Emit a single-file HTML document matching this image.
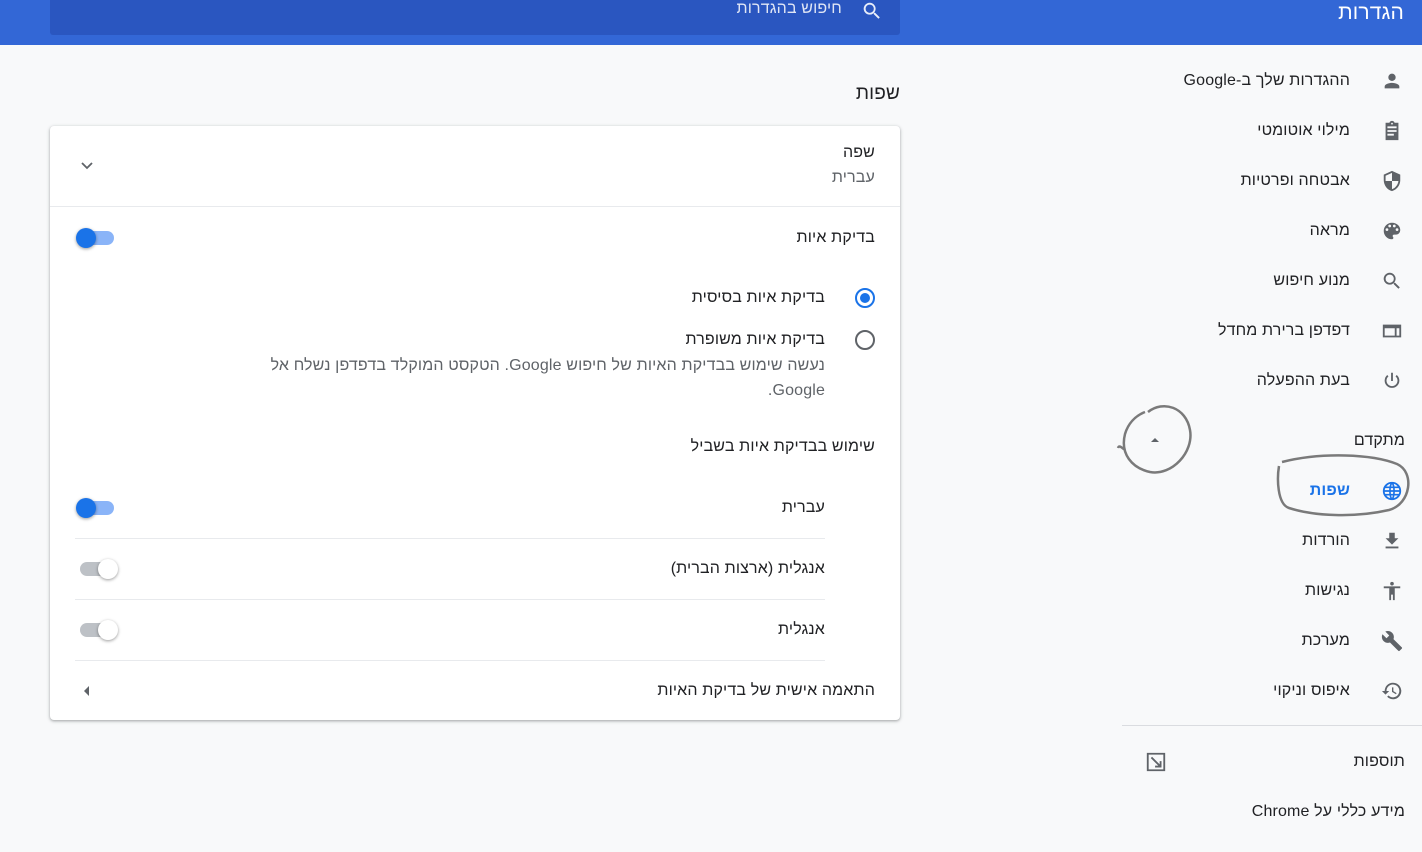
<!DOCTYPE html>
<html dir="rtl"><head><meta charset="utf-8"><style>
*{margin:0;padding:0;box-sizing:border-box}
body{width:1422px;height:852px;background:#f8f9fa;font-family:"Liberation Sans","Noto Sans CJK SC",sans-serif;color:#202124;position:relative;overflow:hidden;font-size:16px;letter-spacing:0.15px}
.a{position:absolute;white-space:nowrap}
.hdr{position:absolute;left:0;top:0;width:1422px;height:45px;background:#3367d6}
.srch{position:absolute;left:50px;top:0;width:850px;height:35px;background:#2a56c0;border-radius:0 0 3px 3px}
.nav{position:absolute;right:72px;font-size:16px;color:#202124;transform:translateY(-50%);white-space:nowrap}
.ic{position:absolute;left:1381px;width:22px;height:22px;transform:translateY(-50%)}
.card{position:absolute;left:50px;top:126px;width:850px;height:594px;background:#fff;border-radius:4px;box-shadow:0 1px 2px rgba(60,64,67,.3),0 1px 3px 1px rgba(60,64,67,.15)}
.t{position:absolute;transform:translateY(-50%);white-space:nowrap}
.sep{position:absolute;height:1px;background:#e8eaed}
.tg{position:absolute;width:36px;height:14px;border-radius:7px}
.tg i{position:absolute;top:-3px;width:20px;height:20px;border-radius:50%;box-shadow:0 1px 3px rgba(0,0,0,.4)}
.on{background:#8ab4f8}.on i{left:-2px;background:#1a73e8}
.off{background:#bdc1c6}.off i{right:-2px;background:#fff}
</style></head><body>
<div class="hdr"></div>
<div class="srch"></div>
<div class="a" style="right:18px;top:1px;color:#fff;font-size:21px">הגדרות</div>
<div class="a" style="right:580px;top:0px;color:#e0e6f5;font-size:16px">חיפוש בהגדרות</div>
<svg class="a" style="left:861px;top:0" width="22" height="22" viewBox="0 0 24 24"><path fill="#e8eefa" d="M15.5 14h-.8l-.3-.3A6.5 6.5 0 1 0 9.5 16a6.5 6.5 0 0 0 4.2-1.6l.3.3v.8l5 5 1.5-1.5-5-5zm-6 0a4.5 4.5 0 1 1 0-9 4.5 4.5 0 0 1 0 9z"/></svg>

<div class="nav" style="top:81px">ההגדרות שלך ב-Google</div>
<div class="nav" style="top:131px">מילוי אוטומטי</div>
<div class="nav" style="top:181px">אבטחה ופרטיות</div>
<div class="nav" style="top:231px">מראה</div>
<div class="nav" style="top:281px">מנוע חיפוש</div>
<div class="nav" style="top:331px">דפדפן ברירת מחדל</div>
<div class="nav" style="top:381px">בעת ההפעלה</div>
<div class="nav" style="top:441px;right:17px">מתקדם</div>
<div class="nav" style="top:491px;color:#1a73e8;font-weight:bold">שפות</div>
<div class="nav" style="top:541px">הורדות</div>
<div class="nav" style="top:591px">נגישות</div>
<div class="nav" style="top:641px">מערכת</div>
<div class="nav" style="top:691px">איפוס וניקוי</div>
<div class="a" style="left:1122px;top:725px;width:300px;height:1px;background:#dadce0"></div>
<div class="nav" style="top:762px;right:17px">תוספות</div>
<div class="nav" style="top:812px;right:17px">מידע כללי על Chrome</div>

<svg class="ic" style="top:81px" viewBox="0 0 24 24"><path fill="#5f6368" d="M12 12a4 4 0 1 0 0-8 4 4 0 0 0 0 8zm0 2c-2.7 0-8 1.3-8 4v2h16v-2c0-2.7-5.3-4-8-4z"/></svg>
<svg class="ic" style="top:131px" viewBox="0 0 24 24"><path fill="#5f6368" d="M19 3h-4.2A3 3 0 0 0 12 1a3 3 0 0 0-2.8 2H5v19h14V3zm-7 0a1 1 0 1 1 0 2 1 1 0 0 1 0-2zm2 14H7v-2h7v2zm3-4H7v-2h10v2zm0-4H7V7h10v2z"/></svg>
<svg class="ic" style="top:181px" viewBox="0 0 24 24"><path fill="#5f6368" d="M12 1 3 5v6c0 5.5 3.8 10.7 9 12 5.2-1.3 9-6.5 9-12V5l-9-4zm0 11h7c-.5 4.1-3.3 7.8-7 8.9V12H5V6.3l7-3.1V12z"/></svg>
<svg class="ic" style="top:231px" viewBox="0 0 24 24"><path fill="#5f6368" d="M12 3a9 9 0 0 0 0 18c.8 0 1.5-.7 1.5-1.5 0-.4-.1-.7-.4-1-.2-.3-.4-.6-.4-1 0-.8.7-1.5 1.5-1.5H16a5 5 0 0 0 5-5c0-4.4-4-8-9-8zm-5.5 9a1.5 1.5 0 1 1 0-3 1.5 1.5 0 0 1 0 3zm3-4a1.5 1.5 0 1 1 0-3 1.5 1.5 0 0 1 0 3zm5 0a1.5 1.5 0 1 1 0-3 1.5 1.5 0 0 1 0 3zm3 4a1.5 1.5 0 1 1 0-3 1.5 1.5 0 0 1 0 3z"/></svg>
<svg class="ic" style="top:281px" viewBox="0 0 24 24"><path fill="#5f6368" d="M15.5 14h-.8l-.3-.3A6.5 6.5 0 1 0 9.5 16a6.5 6.5 0 0 0 4.2-1.6l.3.3v.8l5 5 1.5-1.5-5-5zm-6 0a4.5 4.5 0 1 1 0-9 4.5 4.5 0 0 1 0 9z"/></svg>
<svg class="ic" style="top:331px" viewBox="0 0 24 24"><path fill="#5f6368" d="M2 5v14h20V5H2zm2 4h11v8H4V9zm13 0h3v8h-3V9z"/></svg>
<svg class="ic" style="top:381px" viewBox="0 0 24 24"><path fill="none" stroke="#5f6368" stroke-width="2" d="M12 3v9M7.5 6.2a7 7 0 1 0 9 0"/></svg>
<svg class="ic" style="top:491px" viewBox="0 0 24 24"><circle cx="12" cy="12" r="9" fill="none" stroke="#1a73e8" stroke-width="2"/><path fill="none" stroke="#1a73e8" stroke-width="1.8" d="M3 12h18M12 3c-3 3-3 15 0 18M12 3c3 3 3 15 0 18M4.5 8h15M4.5 16h15"/></svg>
<svg class="ic" style="top:541px" viewBox="0 0 24 24"><path fill="#5f6368" d="M19 9h-4V3H9v6H5l7 7 7-7zM5 18v2h14v-2H5z"/></svg>
<svg class="ic" style="top:591px" viewBox="0 0 24 24"><path fill="#5f6368" d="M12 2a2 2 0 1 1 0 4 2 2 0 0 1 0-4zm9 7h-6v13h-2v-6h-2v6H9V9H3V7h18v2z"/></svg>
<svg class="ic" style="top:641px" viewBox="0 0 24 24"><path fill="#5f6368" d="m22.7 19-9.1-9.1c.9-2.3.4-5-1.5-6.9-2-2-5-2.4-7.4-1.3L9 6 6 9 1.6 4.7C.4 7.1.9 10.1 2.9 12.1c1.9 1.9 4.6 2.4 6.9 1.5l9.1 9.1c.4.4 1 .4 1.4 0l2.300-2.3c.5-.4.5-1.100.1-1.4z"/></svg>
<svg class="ic" style="top:691px" viewBox="0 0 24 24"><path fill="#5f6368" d="M13 3a9 9 0 0 0-9 9H1l3.9 3.9L9 12H6a7 7 0 1 1 2.1 4.9l-1.4 1.4A9 9 0 1 0 13 3zm-1 5v5l4.3 2.5.7-1.2-3.5-2.1V8H12z"/></svg>
<svg class="a" style="left:1145px;top:751px" width="22" height="22" viewBox="0 0 24 24"><path fill="none" stroke="#5f6368" stroke-width="2" d="M3 3h18v18H3zM7 7l10 10M17 11v6h-6"/></svg>
<svg class="a" style="left:1148px;top:435px" width="14" height="10"><path d="M3 7l4-4 4 4z" fill="#5f6368"/></svg>

<svg class="a" style="left:1110px;top:395px" width="310" height="130" viewBox="1110 395 310 130" fill="none" stroke="#7a7a7a" stroke-width="2.5">
<path d="M1148 412c15-12 38-5 42 18 4 22-18 46-40 42-18-4-30-18-25-38 3-10 10-18 20-22M1125 450c-4-3-6-5-7-2"/>
<path d="M1282 462c40-10 90-8 115 2 18 8 14 40-8 46-35 8-75 6-100-2-12-4-12-30-10-42"/>
</svg>

<div class="a" style="right:522px;top:83px;font-size:19px">שפות</div>
<div class="card">
<div class="t" style="right:25px;top:27px">שפה</div>
<div class="t" style="right:25px;top:52px;color:#5f6368">עברית</div>
<svg class="a" style="left:30px;top:35px" width="14" height="10"><path d="M2 2l5 5 5-5" fill="none" stroke="#5f6368" stroke-width="1.8"/></svg>
<div class="sep" style="left:0;right:0;top:80px"></div>
<div class="t" style="right:25px;top:112px">בדיקת איות</div>
<div class="tg on" style="left:28px;top:105px"><i></i></div>
<div class="t" style="right:75px;top:172px">בדיקת איות בסיסית</div>
<div class="a" style="left:805px;top:162px;width:20px;height:20px;border:2px solid #1a73e8;border-radius:50%"><div style="position:absolute;left:3px;top:3px;width:10px;height:10px;border-radius:50%;background:#1a73e8"></div></div>
<div class="t" style="right:75px;top:214px">בדיקת איות משופרת</div>
<div class="a" style="left:805px;top:204px;width:20px;height:20px;border:2px solid #5f6368;border-radius:50%"></div>
<div class="t" style="right:75px;top:240px;color:#5f6368">נעשה שימוש בבדיקת האיות של חיפוש Google. הטקסט המוקלד בדפדפן נשלח אל</div>
<div class="t" style="right:75px;top:265px;color:#5f6368">Google.</div>
<div class="t" style="right:25px;top:321px">שימוש בבדיקת איות בשביל</div>
<div class="t" style="right:75px;top:382px">עברית</div>
<div class="tg on" style="left:28px;top:375px"><i></i></div>
<div class="sep" style="left:25px;right:75px;top:412px"></div>
<div class="t" style="right:75px;top:443px">אנגלית (ארצות הברית)</div>
<div class="tg off" style="left:30px;top:436px"><i></i></div>
<div class="sep" style="left:25px;right:75px;top:473px"></div>
<div class="t" style="right:75px;top:504px">אנגלית</div>
<div class="tg off" style="left:30px;top:497px"><i></i></div>
<div class="sep" style="left:25px;right:75px;top:534px"></div>
<div class="t" style="right:25px;top:565px">התאמה אישית של בדיקת האיות</div>
<svg class="a" style="left:33px;top:559px" width="8" height="12"><path d="M6 1L1 6l5 5z" fill="#5f6368"/></svg>
</div>
</body></html>
